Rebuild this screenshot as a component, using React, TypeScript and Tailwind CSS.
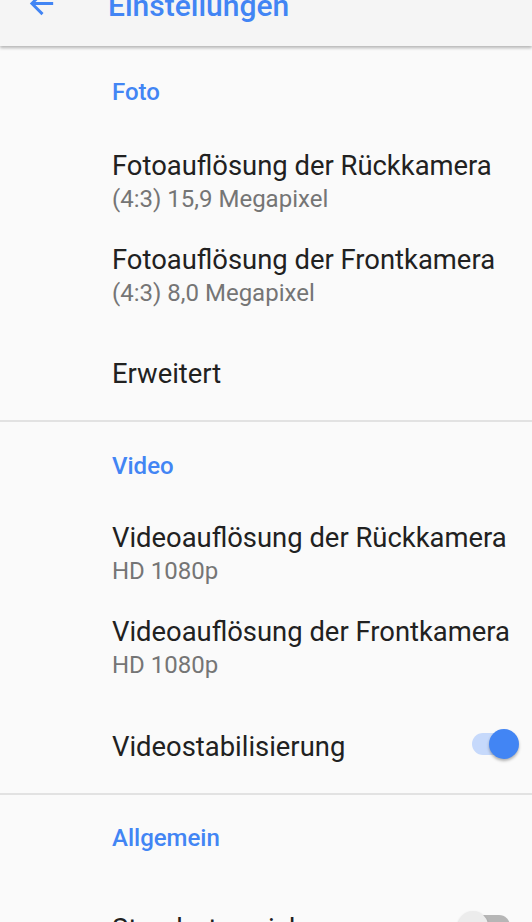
import React from "react";

const font = { fontFamily: "Roboto, 'Noto Sans', sans-serif" };

function Category({ label, className }: { label: string; className: string }) {
  return (
    <div className={`pl-[112px] ${className}`}>
      <div className="text-[24px] leading-[28px] font-medium text-[#4285f4]">{label}</div>
    </div>
  );
}

function Item({ title, summary }: { title: string; summary: string }) {
  return (
    <div className="pl-[112px] pr-4 pt-[16px] pb-[15px]">
      <div className="text-[27.4px] leading-[32px] text-[#212121] whitespace-nowrap">{title}</div>
      <div className="mt-[3px] text-[24px] leading-[28px] text-[#757575] whitespace-nowrap">{summary}</div>
    </div>
  );
}

function Switch({ on }: { on: boolean }) {
  return (
    <div className="relative w-[50px] h-[30px] shrink-0">
      <div
        className={`absolute top-[4px] left-[3px] w-[38px] h-[22px] rounded-full ${
          on ? "bg-[#c6d9fb]" : "bg-[#b6b6b6]"
        }`}
      />
      <div
        className={`absolute top-0 w-[30px] h-[30px] rounded-full shadow-[0_2px_3px_rgba(0,0,0,0.3)] ${
          on ? "left-[20px] bg-[#4285f4]" : "left-[-11px] bg-[#ececec]"
        }`}
      />
    </div>
  );
}

function SwitchRow({ title, on, className }: { title: string; on: boolean; className: string }) {
  return (
    <div className={`flex items-start pl-[112px] pr-[13px] ${className}`}>
      <div className="flex-1 text-[27.4px] leading-[32px] text-[#212121] whitespace-nowrap">{title}</div>
      <div className="mt-[-2px]">
        <Switch on={on} />
      </div>
    </div>
  );
}

function Divider() {
  return <div className="h-[2px] bg-[#e2e2e2]" />;
}

export default function App() {
  return (
    <div className="w-[532px] h-[922px] overflow-hidden bg-[#fafafa]" style={font}>
      {/* Toolbar, scrolled partly out of view */}
      <div className="relative z-10 h-[46px] bg-[#f5f5f5] shadow-[0_2px_3px_rgba(0,0,0,0.28)] overflow-hidden flex items-start">
        <svg viewBox="0 0 24 24" className="ml-[24px] mt-[-14px] w-[35px] h-[35px] shrink-0" fill="#4285f4">
          <path d="M20 11H7.83l5.59-5.59L12 4l-8 8 8 8 1.41-1.41L7.83 13H20v-2z" />
        </svg>
        <div className="ml-[49px] mt-[-9px] text-[30px] leading-[30px] font-medium text-[#4285f4]">
          Einstellungen
        </div>
      </div>

      <Category label="Foto" className="pt-[32px] pb-[28px]" />
      <Item title="Fotoauflösung der Rückkamera" summary="(4:3) 15,9 Megapixel" />
      <Item title="Fotoauflösung der Frontkamera" summary="(4:3) 8,0 Megapixel" />
      <div className="pl-[112px] pt-[36px] pb-[30px]">
        <div className="text-[27.4px] leading-[32px] text-[#212121]">Erweitert</div>
      </div>
      <Divider />

      <Category label="Video" className="pt-[30px] pb-[26px]" />
      <Item title="Videoauflösung der Rückkamera" summary="HD 1080p" />
      <Item title="Videoauflösung der Frontkamera" summary="HD 1080p" />
      <SwitchRow title="Videostabilisierung" on={true} className="pt-[37px] pb-[30px]" />
      <Divider />

      <Category label="Allgemein" className="pt-[29px] pb-[24px]" />
      <SwitchRow title="Standort speichern" on={false} className="pt-[37px] pb-[30px]" />
    </div>
  );
}
